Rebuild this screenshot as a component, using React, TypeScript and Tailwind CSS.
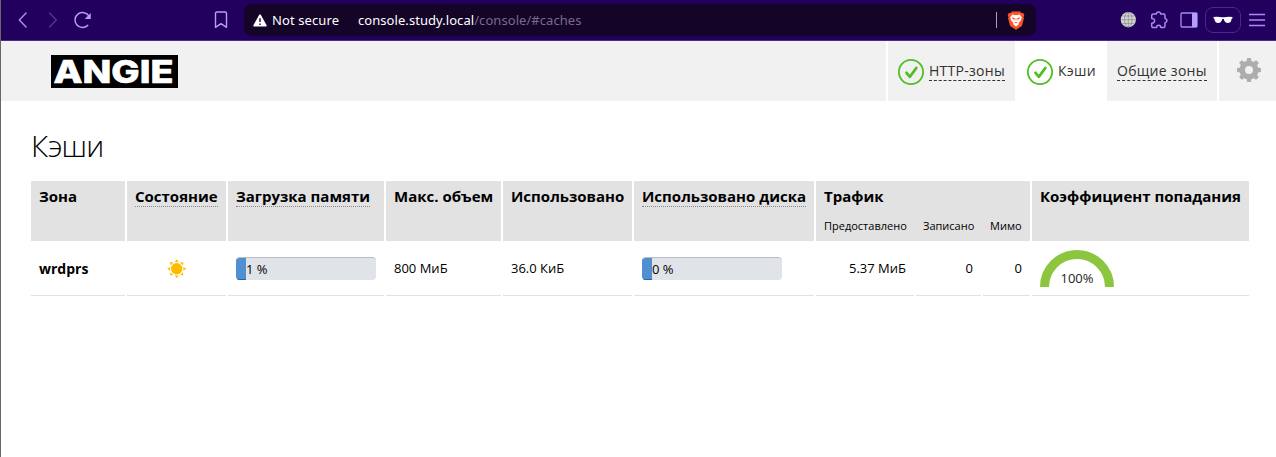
import React from 'react';

const Check = () => (
  <svg width="26" height="26" viewBox="0 0 26 26" fill="none" stroke="#4fbe23" className="shrink-0">
    <circle cx="13" cy="13" r="12.1" strokeWidth="1.8" />
    <path d="M8.5 13.8l3.400 4 6.400-8.800" strokeWidth="2.8" strokeLinecap="round" strokeLinejoin="round" />
  </svg>
);

const Toolbar = () => (
  <div className="flex h-[41px] items-center border-b border-[#4c2a8a] bg-[#22005e] pl-[14px] pr-[9px]">
    <svg width="16" height="18" viewBox="0 0 16 18" fill="none" stroke="#a78bf5" strokeWidth="1.5" strokeLinecap="round"><path d="M11 2L4.400 9l6.600 7" /></svg>
    <svg width="16" height="18" viewBox="0 0 16 18" fill="none" stroke="#553092" strokeWidth="1.5" strokeLinecap="round" className="ml-[14px]"><path d="M4.500 2l6.800 7-6.800 7" /></svg>
    <svg width="20" height="20" viewBox="0 0 20 20" fill="none" stroke="#b79cff" strokeWidth="1.5" strokeLinecap="round" className="ml-[12px]">
      <path d="M14.700 15.400A7.500 7.500 0 1 1 16 6.200" /><path d="M13.500 8.200h3.500V4.700z" fill="#b79cff" />
    </svg>
    <svg width="14" height="18" viewBox="0 0 14 18" fill="none" stroke="#b79cff" strokeWidth="1.4" strokeLinejoin="round" className="ml-[121px]"><path d="M1.5 16.3V2.4Q1.5 1 3 1h8q1.5 0 1.5 1.4v13.9L7 12.6z" /></svg>
    <div className="ml-[16px] flex h-[32px] w-[792px] items-center rounded-[8px] bg-[#140428] pl-[9px] font-['Noto_Sans',sans-serif] text-[13px] text-white">
      <svg width="14" height="13" viewBox="0 0 14 13"><path d="M7 1.3L12.8 11.7H1.2z" fill="#fff" stroke="#fff" strokeWidth="1.8" strokeLinejoin="round" /><path d="M7 4.3v3.8M7 9.4v1.5" stroke="#25143a" strokeWidth="1.5" /></svg>
      <span className="ml-[5px] w-[86px] whitespace-nowrap pt-px tracking-[0.1px]">Not secure</span>
      <span className="whitespace-nowrap pt-px tracking-[0.06px]">console.study.local<span className="text-[#786b8b]">/console/#caches</span></span>
      <span className="ml-auto h-[16px] w-px bg-[#a9a2b5]" />
      <svg width="18" height="19" viewBox="0 0 18 19" className="ml-[10px] mr-[11px]">
        <path d="M5 .5h8l1.5 1.5 1.8-.1 1 2.6-.8 1.6.4 1.4-2 7.4L9 18.7l-5.900-3.800-2-7.400.4-1.400L.7 4.500l1-2.600 1.800.1z" fill="#fb542b" />
        <path d="M5.300 3.500L9 4.200l3.700-.7 2.100 3-1.200 3.200-2 2.100.4 1.100L9 15.400l-3-2.500.4-1.100-2-2.100-1.200-3.200z" fill="#fff" />
        <path d="M5 6.700l2.500.6-.3 1.500zM13 6.700l-2.500.6.3 1.500zM7.400 11L9 12l1.600-1M9 7v3" fill="#fb542b" stroke="#fb542b" strokeWidth=".6" />
      </svg>
    </div>
    <svg width="16" height="16" viewBox="0 0 16 16" className="ml-[84px]">
      <circle cx="8.300" cy="7.700" r="7.600" fill="#d4d4d4" />
      <path d="M.8 7.700h15M2.300 4h12M2.300 11.400h12M8.300 .2v15" stroke="#888" strokeWidth=".7" fill="none" /><ellipse cx="8.300" cy="7.700" rx="3.800" ry="7.500" fill="none" stroke="#888" strokeWidth=".7" />
    </svg>
    <svg width="18" height="18" viewBox="0 0 18 18" fill="none" stroke="#a78bf5" strokeWidth="1.5" strokeLinejoin="round" className="ml-[14px]">
      <path d="M1.700 5Q1.700 3 3.500 3H6.300Q6.500 1 8.500 1t2.200 2H13.500Q15 3 15 4.700V7.500Q17 7.800 17 9.500T15 11.700V15q0 1.600-1.600 1.600H11Q10.700 14.300 8.700 14.300T6.400 16.600H3.400Q1.700 16.600 1.700 15V12.200Q4.600 12 4.600 9.700T1.700 7.500z" />
    </svg>
    <svg width="18" height="16" viewBox="0 0 18 16" className="ml-[12px]"><rect x="1" y="1" width="16" height="14" rx="1" fill="none" stroke="#a78bf5" strokeWidth="1.3" /><path d="M12 1h5v14h-5z" fill="#b79cff" /></svg>
    <div className="ml-[7px] flex h-[26px] w-[36px] items-center justify-center rounded-[8px] border border-[#4c278d]">
      <svg width="20" height="8" viewBox="0 0 20 8" fill="#fff"><path d="M.5 1Q5 .4 9 1.300h2q4-.9 8.500-.300v1.200l-.9.500Q18.200 7 14.700 7 11.700 7 10.700 3H9.300Q8.300 7 5.300 7 1.800 7 1.400 2.700L.5 2.200z" /></svg>
    </div>
    <svg width="18" height="14" viewBox="0 0 18 14" className="ml-[7px]" stroke="#a78bf5" strokeWidth="1.5"><path d="M1 1.500h16M1 7h16M1 12.500h16" /></svg>
  </div>
);

const Header = () => (
  <header className="flex h-[60px] bg-[#f1f1f1] text-[14px] leading-[19px] tracking-[0.28px] text-[#333]">
    <svg width="127" height="33" viewBox="0 0 127 33" className="ml-[50px] mt-[14px] overflow-visible">
      <rect width="127" height="33" fill="#000" />
      <text x="2.500" y="27.500" textLength="120" lengthAdjust="spacingAndGlyphs" fill="#fff" stroke="#fff" strokeWidth=".6" fontFamily="Inter, sans-serif" fontWeight="800" fontSize="31" letterSpacing="0">ANGIE</text>
    </svg>
    <nav className="ml-auto flex">
      <div className="flex w-[129px] items-center border-l-2 border-white pl-[10px] pt-[2px]">
        <Check />
        <span className="mb-[2px] ml-[5px] whitespace-nowrap border-b border-dashed border-[#333]">HTTP-зоны</span>
      </div>
      <div className="flex w-[92px] items-center bg-white pl-[12px] pt-[2px]">
        <Check />
        <span className="mb-[2px] ml-[5px] border-b border-transparent">Кэши</span>
      </div>
      <div className="flex w-[110px] items-center pl-[10px] pt-[2px]">
        <span className="mb-[2px] whitespace-nowrap border-b border-dashed border-[#333]">Общие зоны</span>
      </div>
      <div className="flex w-[59px] items-center border-l-2 border-white pb-[2px] pl-[18px]">
        <svg width="24" height="24" viewBox="0 0 24 24">
          <g fill="#adadad">
            <circle cx="12" cy="12" r="9.6" />
            {[0, 45, 90, 135].map((a) => <rect key={a} x="9.8" y="0" width="4.4" height="24" rx="1" transform={`rotate(${a} 12 12)`} />)}
          </g>
          <circle cx="12" cy="12" r="4" fill="#f1f1f1" />
        </svg>
      </div>
    </nav>
  </header>
);

const Th = ({ children, hint }: { children: React.ReactNode; hint?: boolean }) => (
  <div className="h-[60px] whitespace-nowrap bg-[#e2e2e2] px-[8px] pt-[6px] text-[15px] font-bold leading-[19px]">
    <span className={hint ? 'inline-block border-b border-dotted border-[#888]' : 'inline-block'}>{children}</span>
  </div>
);

const Td = ({ children, className }: { children: React.ReactNode; className: string }) => (
  <div className={`flex h-[55px] items-center whitespace-nowrap border-b border-[#e2e2e2] px-[8px] ${className}`}>{children}</div>
);

const Bar = ({ value }: { value: string }) => (
  <div className="flex h-[23px] w-[140px] shrink-0 overflow-hidden rounded-[4px] border-t border-[#b9bcc4] bg-[#e0e3e8]">
    <div className="w-[10px] border-b border-[#1f69b0] bg-[#4f8fd2]" />
    <span className="leading-[23px]">{value}</span>
  </div>
);

const Sun = () => (
  <svg width="20" height="20" viewBox="0 0 20 20" fill="#fdbc00">
    <circle cx="9.700" cy="9.700" r="5.700" />
    {[0, 45, 90, 135, 180, 225, 270, 315].map((a) => <path key={a} d="M9.700 .2l2 3a7 7 0 0 0-4 0z" transform={`rotate(${a} 9.700 9.700)`} />)}
  </svg>
);

export default function App() {
  return (
    <div className="h-[457px] w-[1276px] overflow-hidden border-l border-[#666] bg-white font-['Open_Sans','Noto_Sans',sans-serif] text-black">
      <Toolbar />
      <Header />
      <main className="pl-[30px] pt-[25px]">
        <h1 className="h-[55px] text-[30px] font-light leading-[40px] tracking-[-0.7px]">Кэши</h1>
        <div className="grid w-[1218px] grid-cols-[94px_99px_156px_115px_129px_180px_98px_65px_47px_217px] gap-x-[2px]">
          <Th>Зона</Th>
          <Th hint>Состояние</Th>
          <Th hint>Загрузка памяти</Th>
          <Th>Макс. объем</Th>
          <Th>Использовано</Th>
          <Th hint>Использовано диска</Th>
          <div className="col-span-3 h-[60px] bg-[#e2e2e2] pt-[6px] text-[15px] font-bold leading-[19px]">
            <div className="pl-[8px]">Трафик</div>
            <div className="mt-[12px] grid grid-cols-[98px_65px_47px] gap-x-[2px] text-[11px] font-normal leading-[16px]">
              <span className="pl-[8px]">Предоставлено</span>
              <span className="pl-[7px]">Записано</span>
              <span className="pl-[7px]">Мимо</span>
            </div>
          </div>
          <Th>Коэффициент попадания</Th>
          <Td className="text-[14px] font-bold">wrdprs</Td>
          <Td className="justify-center pt-px"><Sun /></Td>
          <Td className="text-[13px]"><Bar value="1 %" /></Td>
          <Td className="pt-[2px] text-[13px]">800 МиБ</Td>
          <Td className="pt-[2px] text-[13px]">36.0 КиБ</Td>
          <Td className="text-[13px]"><Bar value="0 %" /></Td>
          <Td className="justify-end pt-[2px] text-[13px]">5.37 МиБ</Td>
          <Td className="justify-end pt-[2px] text-[13px]">0</Td>
          <Td className="justify-end pt-[2px] text-[13px]">0</Td>
          <Td className="text-[13px]">
            <svg width="74" height="37" viewBox="0 0 74 37">
              <path d="M4.500 37a32.500 32.500 0 0 1 65 0" fill="none" stroke="#8cc63f" strokeWidth="9" />
              <text x="37" y="33" textAnchor="middle" fontSize="13" fill="#222">100%</text>
            </svg>
          </Td>
        </div>
      </main>
    </div>
  );
}
